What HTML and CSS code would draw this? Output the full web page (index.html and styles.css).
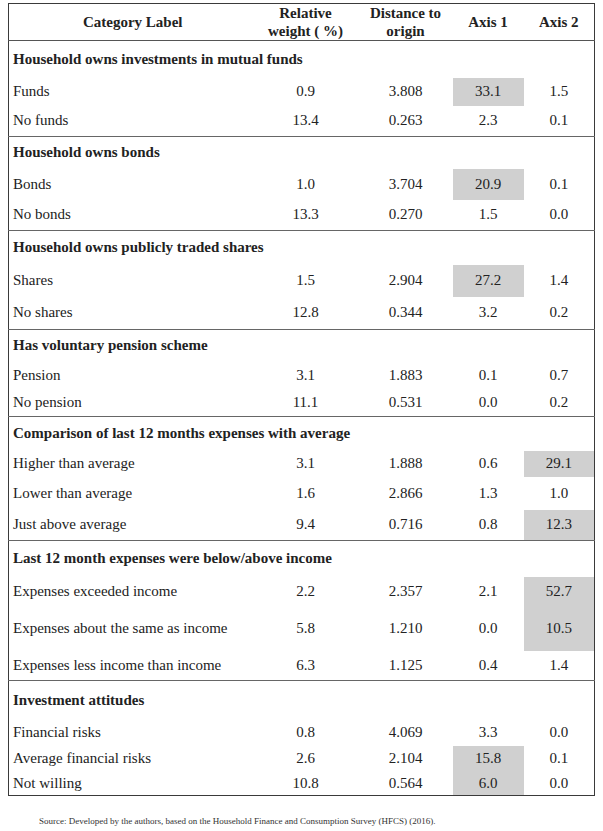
FILE: index.html
```html
<!DOCTYPE html>
<html lang="en">
<head>
<meta charset="utf-8">
<title>Category table</title>
<link rel="stylesheet" href="styles.css">
</head>
<body>
<table class="ctab">
  <colgroup>
    <col class="c-label"><col class="c-w"><col class="c-d"><col class="c-a"><col class="c-a">
  </colgroup>
  <thead>
    <tr class="hdr">
      <th>Category Label</th>
      <th>Relative<br>weight ( %)</th>
      <th>Distance to<br>origin</th>
      <th>Axis 1</th>
      <th>Axis 2</th>
    </tr>
  </thead>
  <tbody>
    <tr class="sec h37"><td colspan="5">Household owns investments in mutual funds</td></tr>
    <tr class="h28"><td>Funds</td><td>0.9</td><td>3.808</td><td class="hl">33.1</td><td>1.5</td></tr>
    <tr class="h31"><td>No funds</td><td>13.4</td><td>0.263</td><td>2.3</td><td>0.1</td></tr>
  </tbody>
  <tbody>
    <tr class="sec h32"><td colspan="5">Household owns bonds</td></tr>
    <tr class="h31"><td>Bonds</td><td>1.0</td><td>3.704</td><td class="hl">20.9</td><td>0.1</td></tr>
    <tr class="h31"><td>No bonds</td><td>13.3</td><td>0.270</td><td>1.5</td><td>0.0</td></tr>
  </tbody>
  <tbody>
    <tr class="sec h34"><td colspan="5">Household owns publicly traded shares</td></tr>
    <tr class="h32"><td>Shares</td><td>1.5</td><td>2.904</td><td class="hl">27.2</td><td>1.4</td></tr>
    <tr class="h33"><td>No shares</td><td>12.8</td><td>0.344</td><td>3.2</td><td>0.2</td></tr>
  </tbody>
  <tbody>
    <tr class="sec h32"><td colspan="5">Has voluntary pension scheme</td></tr>
    <tr class="h28"><td>Pension</td><td>3.1</td><td>1.883</td><td>0.1</td><td>0.7</td></tr>
    <tr class="h27"><td>No pension</td><td>11.1</td><td>0.531</td><td>0.0</td><td>0.2</td></tr>
  </tbody>
  <tbody>
    <tr class="sec h34"><td colspan="5">Comparison of last 12 months expenses with average</td></tr>
    <tr class="h26"><td>Higher than average</td><td>3.1</td><td>1.888</td><td>0.6</td><td class="hl">29.1</td></tr>
    <tr class="h33"><td>Lower than average</td><td>1.6</td><td>2.866</td><td>1.3</td><td>1.0</td></tr>
    <tr class="h31"><td>Just above average</td><td>9.4</td><td>0.716</td><td>0.8</td><td class="hl">12.3</td></tr>
  </tbody>
  <tbody>
    <tr class="sec h36"><td colspan="5">Last 12 month expenses were below/above income</td></tr>
    <tr class="h30"><td>Expenses exceeded income</td><td>2.2</td><td>2.357</td><td>2.1</td><td class="hl">52.7</td></tr>
    <tr class="h44"><td>Expenses about the same as income</td><td>5.8</td><td>1.210</td><td>0.0</td><td class="hl">10.5</td></tr>
    <tr class="h30"><td>Expenses less income than income</td><td>6.3</td><td>1.125</td><td>0.4</td><td>1.4</td></tr>
  </tbody>
  <tbody>
    <tr class="sec h39"><td colspan="5">Investment attitudes</td></tr>
    <tr class="h26"><td>Financial risks</td><td>0.8</td><td>4.069</td><td>3.3</td><td>0.0</td></tr>
    <tr class="h26"><td>Average financial risks</td><td>2.6</td><td>2.104</td><td class="hl">15.8</td><td>0.1</td></tr>
    <tr class="h24"><td>Not willing</td><td>10.8</td><td>0.564</td><td class="hl">6.0</td><td>0.0</td></tr>
  </tbody>
</table>
<p class="source">Source: Developed by the authors, based on the Household Finance and Consumption Survey (HFCS) (2016).</p>
</body>
</html>
```
FILE: styles.css
```css
html, body {
  background: #ffffff;
}
body {
  margin: 3px 0 0 8px;
  font-family: "Liberation Serif", "DejaVu Serif", serif;
  color: #222222;
}
.ctab {
  width: 586px;
  border-collapse: collapse;
  table-layout: fixed;
  border: 1px solid #3a3a3a;
  font-family: "Liberation Serif", "DejaVu Serif", serif;
  font-size: 15px;
}
.c-label { width: 244px; }
.c-w { width: 106px; }
.c-d { width: 94px; }
.c-a { width: 71px; }

.ctab th,
.ctab td {
  padding: 0;
  text-align: center;
  vertical-align: middle;
  font-family: "Liberation Serif", "DejaVu Serif", serif;
}
.ctab td:first-child,
.ctab th:first-child {
  padding-left: 4px;
}
.ctab td:first-child {
  text-align: left;
}
.hdr th {
  height: 36px;
  font-weight: bold;
  line-height: 18px;
  border-bottom: 1px solid #555555;
}
.ctab tbody + tbody tr.sec td {
  border-top: 1px solid #666666;
}
.sec td {
  font-weight: bold;
}
.hl {
  background: #d0d0d0;
}
.h24 { height: 24px; }
.h26 { height: 26px; }
.h27 { height: 27px; }
.h28 { height: 28px; }
.h30 { height: 30px; }
.h31 { height: 31px; }
.h32 { height: 32px; }
.h33 { height: 33px; }
.h34 { height: 34px; }
.h36 { height: 36px; }
.h37 { height: 37px; }
.h39 { height: 39px; }
.h44 { height: 44px; }

.source {
  margin: 20px 0 0 31px;
  font-family: "Liberation Serif", "DejaVu Serif", serif;
  font-size: 9px;
  color: #333333;
}
```
